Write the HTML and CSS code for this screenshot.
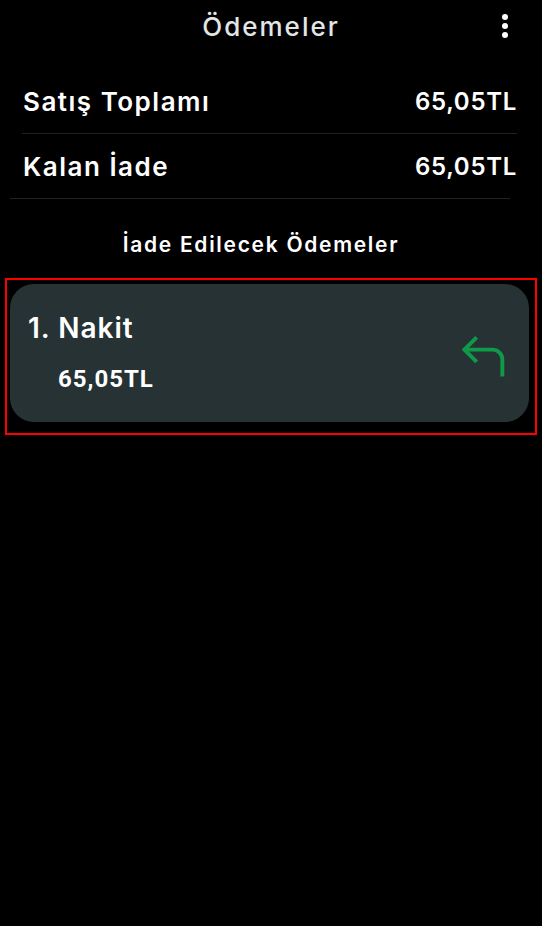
FILE: index.html
```html
<!DOCTYPE html>
<html lang="tr">
<head>
  <meta charset="UTF-8">
  <meta name="viewport" content="width=device-width, initial-scale=1.0">
  <title>Ödemeler</title>
  <link rel="stylesheet" href="styles.css">
</head>
<body>

  <div class="header">
    <h1>Ödemeler</h1>
    <div class="menu">
      <span></span><span></span><span></span>
    </div>
  </div>

  <div class="summary">
    <div class="row first">
      <span class="label">Satış Toplamı</span>
      <span class="value">65,05TL</span>
    </div>
    <div class="row">
      <span class="label">Kalan İade</span>
      <span class="value">65,05TL</span>
    </div>
    <div class="divider"></div>
  </div>

  <h2 class="section-title">İade Edilecek Ödemeler</h2>

  <div class="highlight">
    <div class="card">
      <div class="card-text">
        <div class="card-name">1. Nakit</div>
        <div class="card-amount">65,05TL</div>
      </div>
      <svg class="refund-icon" width="44" height="44" viewBox="3 3 18 18" fill="none" stroke="#0f9a49" stroke-width="1.6" stroke-linecap="butt" stroke-linejoin="miter">
        <polyline points="9 14 4 9 9 4"></polyline>
        <path d="M19.5 20v-7a4 4 0 0 0-4-4H4"></path>
      </svg>
    </div>
  </div>

</body>
</html>
```

FILE: styles.css
```css
body {
  font-family: Inter, "Noto Sans", sans-serif;
  background-color: #000;
  color: #fff;
  margin: 0;
  padding: 0;
}

.header {
  height: 52px;
  display: flex;
  justify-content: center;
  align-items: center;
  position: relative;
}

.header h1 {
  margin: 0;
  font-size: 26px;
  font-weight: 500;
  letter-spacing: 2px;
  color: #e2e6e6;
}

.menu {
  position: absolute;
  right: 34px;
  top: 14px;
  display: flex;
  flex-direction: column;
  gap: 3px;
}

.menu span {
  width: 6px;
  height: 6px;
  border-radius: 50%;
  background-color: #fff;
}

.summary {
  margin-top: 17px;
}

.row {
  height: 64px;
  display: flex;
  justify-content: space-between;
  align-items: center;
  margin: 0 25px 0 23px;
  font-weight: 600;
}

.row .label {
  font-size: 26px;
  letter-spacing: 1.5px;
}

.row .value {
  font-size: 24px;
  letter-spacing: 0.7px;
}

.row.first {
  margin-left: 22px;
  padding-left: 1px;
  border-bottom: 1px solid #1d2325;
}

.divider {
  height: 1px;
  background-color: #1d2325;
  margin: 0 32px 0 10px;
}

.section-title {
  margin: 0;
  height: 89px;
  display: flex;
  justify-content: center;
  align-items: center;
  font-size: 21px;
  font-weight: 600;
  letter-spacing: 1.7px;
  padding: 1px 20px 0 0;
  box-sizing: border-box;
}

.highlight {
  margin: -10px 5px 0;
  border: 2px solid #ff0000;
  padding: 4px 6px 11px 3px;
}

.card {
  height: 138px;
  background-color: #263234;
  border-radius: 24px;
  display: flex;
  justify-content: space-between;
  align-items: center;
  padding: 0 23px 0 18px;
}

.card-text {
  display: flex;
  flex-direction: column;
  margin-top: -2px;
}

.card-name {
  font-size: 28px;
  font-weight: 600;
  letter-spacing: 1px;
}

.card-amount {
  margin-top: 20px;
  margin-left: 30px;
  font-family: Roboto, sans-serif;
  font-size: 24px;
  font-weight: 700;
  letter-spacing: 1px;
}

.refund-icon {
  margin-top: 7px;
}
```
